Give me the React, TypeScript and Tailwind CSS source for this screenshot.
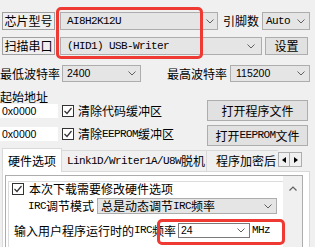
import React from "react";

function Chevron({ color = "#606060" }: { color?: string }) {
  return (
    <svg width="8" height="5" viewBox="0 0 8 5" className="shrink-0">
      <path d="M0.5 0.5 L4 4 L7.5 0.5" fill="none" stroke={color} strokeWidth="1" />
    </svg>
  );
}

function Check() {
  return (
    <div className="w-[12px] h-[12px] shrink-0 bg-white border border-[#333333] flex items-center justify-center">
      <svg width="10" height="10" viewBox="0 0 10 10">
        <path d="M1.5 5 L4 7.5 L8.5 2" fill="none" stroke="#333333" strokeWidth="1.2" />
      </svg>
    </div>
  );
}

const mono = "font-['Liberation_Mono',monospace] text-[11px] tracking-[-0.6px]";
const sans = "font-['Liberation_Sans',sans-serif] text-[10.5px]";

export default function App() {
  return (
    <div className="relative w-[315px] h-[247px] overflow-hidden bg-[#f0f0f0] text-black font-['Noto_Sans_CJK_SC',sans-serif] text-[12px] leading-none">
      {/* row 1 */}
      <div className="flex items-center h-[18px] mt-[12px]">
        <div className="ml-[2px] w-[53px] h-[18px] border border-[#a0a0a0] bg-[#efefef] flex items-center justify-center">芯片型号</div>
        <div className="ml-[5px] w-[158px] h-[18px] border border-[#adadad] bg-[#e5e5e5] flex items-center justify-between pl-[6px] pr-[3px]">
          <span className={mono}>AI8H2K12U</span>
          <Chevron />
        </div>
        <span className="ml-[5px] w-[37px]">引脚数</span>
        <div className="ml-[2px] w-[48px] h-[18px] border border-[#adadad] bg-[#e5e5e5] flex items-center justify-between pl-[3px] pr-[4px]">
          <span className={mono}>Auto</span>
          <Chevron />
        </div>
      </div>

      {/* row 2 */}
      <div className="flex items-center h-[18px] mt-[7px]">
        <div className="ml-[2px] w-[53px] h-[18px] border border-[#a0a0a0] bg-[#efefef] flex items-center justify-center">扫描串口</div>
        <div className="ml-[5px] w-[202px] h-[18px] border border-[#adadad] bg-[#e5e5e5] flex items-center justify-between pl-[6px] pr-[6px]">
          <span className={mono}>(HID1) USB-Writer</span>
          <Chevron />
        </div>
        <div className="ml-[3px] w-[43px] h-[18px] border border-[#adadad] bg-[#e1e1e1] flex items-center justify-center">设置</div>
      </div>

      {/* row 3 */}
      <div className="flex items-center h-[17px] mt-[10px]">
        <span className="w-[60px]">最低波特率</span>
        <div className="ml-[2px] w-[79px] h-[17px] border border-[#adadad] bg-[#e5e5e5] flex items-center justify-between pl-[4px] pr-[4px]">
          <span className={sans}>2400</span>
          <Chevron />
        </div>
        <span className="ml-[26px] w-[60px]">最高波特率</span>
        <div className="ml-[3px] w-[80px] h-[17px] border border-[#adadad] bg-[#e5e5e5] flex items-center justify-between pl-[5px] pr-[4px]">
          <span className={sans}>115200</span>
          <Chevron />
        </div>
      </div>

      {/* address + buttons */}
      <div className="flex mt-[7px] h-[57px]">
        <div className="w-[207px] flex flex-col">
          <div className="h-[15px] flex items-center">起始地址</div>
          <div className="h-[14px] flex items-center">
            <div className={`w-[58px] h-[14px] bg-white flex items-center pl-[2px] ${sans}`}>0x0000</div>
            <div className="ml-[4px]"><Check /></div>
            <span className="ml-[4px]">清除代码缓冲区</span>
          </div>
          <div className="h-[14px] mt-[9px] flex items-center">
            <div className={`w-[58px] h-[14px] bg-white flex items-center pl-[2px] ${sans}`}>0x0000</div>
            <div className="ml-[4px]"><Check /></div>
            <span className="ml-[4px] flex items-center">清除<span className={mono}>EEPROM</span>缓冲区</span>
          </div>
        </div>
        <div className="flex flex-col">
          <div className="mt-[11px] w-[101px] h-[21px] border border-[#adadad] bg-[#e1e1e1] flex items-center justify-center">打开程序文件</div>
          <div className="mt-[4px] w-[101px] h-[21px] border border-[#adadad] bg-[#e1e1e1] flex items-center justify-center">
            打开<span className={mono}>EEPROM</span>文件
          </div>
        </div>
      </div>

      {/* tabs */}
      <div className="flex items-end h-[23px] mt-[2px] ml-[2px]">
        <div className="relative z-10 -mb-px w-[60px] h-[24px] bg-white border border-b-0 border-[#d9d9d9] flex items-center justify-center">硬件选项</div>
        <div className="w-[216px] h-[21px] overflow-hidden flex items-end">
          <div className="shrink-0 w-[145px] h-[21px] border-t border-r border-[#d9d9d9] flex items-center pl-[5px]">
            <span className={mono}>Link1D/Writer1A/U8W</span>脱机
          </div>
          <div className="shrink-0 w-[71px] h-[21px] border-t border-[#d9d9d9] flex items-center pl-[9px] whitespace-nowrap">程序加密后</div>
        </div>
        <div className="self-start mt-[4px] flex">
          <div className="w-[12px] h-[15px] border border-[#adadad] bg-[#f0f0f0] flex items-center justify-center">
            <svg width="4" height="6" viewBox="0 0 4 6"><path d="M4 0 L0 3 L4 6 Z" fill="#000" /></svg>
          </div>
          <div className="w-[12px] h-[15px] border border-l-0 border-[#adadad] bg-[#f0f0f0] flex items-center justify-center">
            <svg width="4" height="6" viewBox="0 0 4 6"><path d="M0 0 L4 3 L0 6 Z" fill="#000" /></svg>
          </div>
        </div>
      </div>

      {/* panel */}
      <div className="ml-[2px] w-[308px] h-[80px] border-t border-x border-[#d9d9d9] bg-white pl-[2px] pt-[3px]">
        <div className="w-[298px] h-[80px] border border-[#adadad] flex">
          <div className="flex-1 overflow-hidden">
            <div className="ml-[2px] mt-[5px] w-[290px] h-[80px] border border-[#dcdcdc] pt-[1px]">
              <div className="flex items-center h-[12px] ml-[3px]">
                <Check />
                <span className="ml-[5px]">本次下载需要修改硬件选项</span>
              </div>
              <div className="flex items-center h-[16px] mt-[3px] pl-[19px]">
                <span className="w-[69px] flex items-center"><span className={mono}>IRC</span>调节模式</span>
                <div className="w-[180px] h-[16px] border border-[#adadad] bg-[#e5e5e5] flex items-center justify-between pl-[3px] pr-[4px]">
                  <span className="flex items-center">总是动态调节<span className={mono}>IRC</span>频率</span>
                  <Chevron />
                </div>
              </div>
              <div className="flex items-center h-[15px] mt-[9px] pl-[5px]">
                <span className="w-[164px] flex items-center whitespace-nowrap">输入用户程序运行时的<span className={mono}>IRC</span>频率</span>
                <div className="w-[72px] h-[15px] border border-[#7a7a7a] bg-white flex items-center justify-between pl-[2px] pr-[4px]">
                  <span className={sans}>24</span>
                  <Chevron />
                </div>
                <span className={`ml-[2px] ${mono}`}>MHz</span>
              </div>
            </div>
          </div>
          <div className="w-[19px] h-full bg-[#f0f0f0] flex justify-center pt-[10px]">
            <svg width="8" height="5" viewBox="0 0 8 5"><path d="M0.5 4.5 L4 1 L7.5 4.5" fill="none" stroke="#606060" strokeWidth="1.2" /></svg>
          </div>
        </div>
      </div>

      {/* red highlight overlays */}
      <div className="absolute left-[56px] top-[7px] w-[147px] h-[52px] border-[3px] border-[#ee3a32] rounded-[5px]" />
      <div className="absolute left-[157px] top-[219px] w-[128px] h-[26px] border-[3px] border-[#ee3a32] rounded-[5px]" />
    </div>
  );
}
